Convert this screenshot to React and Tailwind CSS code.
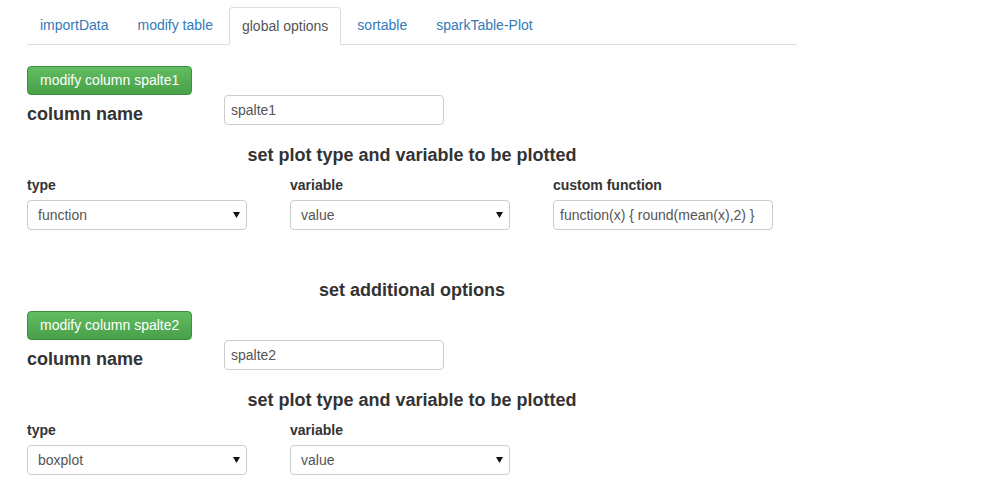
const FONT = { fontFamily: '"Liberation Sans", Arial, sans-serif' };

const TABS = ['importData', 'modify table', 'global options', 'sortable', 'sparkTable-Plot'];
const ACTIVE = 'global options';

function Tabs() {
  return (
    <div className="flex h-[45px] w-[770px] items-end border-b border-[#ddd]">
      {TABS.map((t) => (
        <div
          key={t}
          className={
            t === ACTIVE
              ? 'mr-[3px] -mb-px rounded-t border border-[#ddd] border-b-white bg-white px-[12px] py-[8px] text-[14px] leading-[20px] text-[#555]'
              : 'mr-[3px] border border-transparent px-[12px] py-[8px] text-[14px] leading-[20px] text-[#337ab7]'
          }
        >
          {t}
        </div>
      ))}
    </div>
  );
}

function GreenButton({ children }) {
  return (
    <div className="inline-block h-[29px] rounded border border-[#3e8f3e] bg-gradient-to-b from-[#62bd62] to-[#48a048] px-[12px] text-[14px] leading-[27px] text-white">
      {children}
    </div>
  );
}

function TextBox({ value, w = 'w-[220px]' }) {
  return (
    <div className={`h-[30px] ${w} rounded border border-[#ccc] bg-white px-[6px] text-[14px] leading-[28px] text-[#555]`}>
      {value}
    </div>
  );
}

function Select({ value }) {
  return (
    <div className="flex h-[30px] w-[220px] items-center justify-between rounded border border-[#ccc] bg-white pl-[10px] pr-[6px] text-[14px] text-[#555]">
      <span>{value}</span>
      <svg width="7" height="6" viewBox="0 0 7 6">
        <path d="M0 0 H7 L3.5 6 Z" fill="#111" />
      </svg>
    </div>
  );
}

function Field({ label, children }) {
  return (
    <div className="flex w-[263px] flex-col">
      <div className="mb-[5px] text-[14px] font-bold leading-[20px] text-[#333]">{label}</div>
      {children}
    </div>
  );
}

function Heading({ children, className = '' }) {
  return (
    <div className={`w-[770px] text-center text-[18px] font-bold leading-[20px] text-[#333] ${className}`}>
      {children}
    </div>
  );
}

function ColumnBlock({ name, type, custom }) {
  return (
    <>
      <GreenButton>modify column {name}</GreenButton>
      <div className="flex">
        <div className="w-[197px] pt-[9px] text-[18px] font-bold leading-[20px] text-[#333]">column name</div>
        <TextBox value={name} />
      </div>
      <Heading className="mt-[20px]">set plot type and variable to be plotted</Heading>
      <div className="mt-[10px] flex">
        <Field label="type">
          <Select value={type} />
        </Field>
        <Field label="variable">
          <Select value="value" />
        </Field>
        {custom && (
          <Field label="custom function">
            <TextBox value={custom} />
          </Field>
        )}
      </div>
    </>
  );
}

export default function App() {
  return (
    <div className="h-[492px] w-[1008px] overflow-hidden bg-white pl-[27px]" style={FONT}>
      <Tabs />
      <div className="mt-[21px] flex flex-col items-start">
        <ColumnBlock name="spalte1" type="function" custom="function(x) { round(mean(x),2) }" />
        <Heading className="mt-[50px] mb-[11px]">set additional options</Heading>
        <ColumnBlock name="spalte2" type="boxplot" />
      </div>
    </div>
  );
}
